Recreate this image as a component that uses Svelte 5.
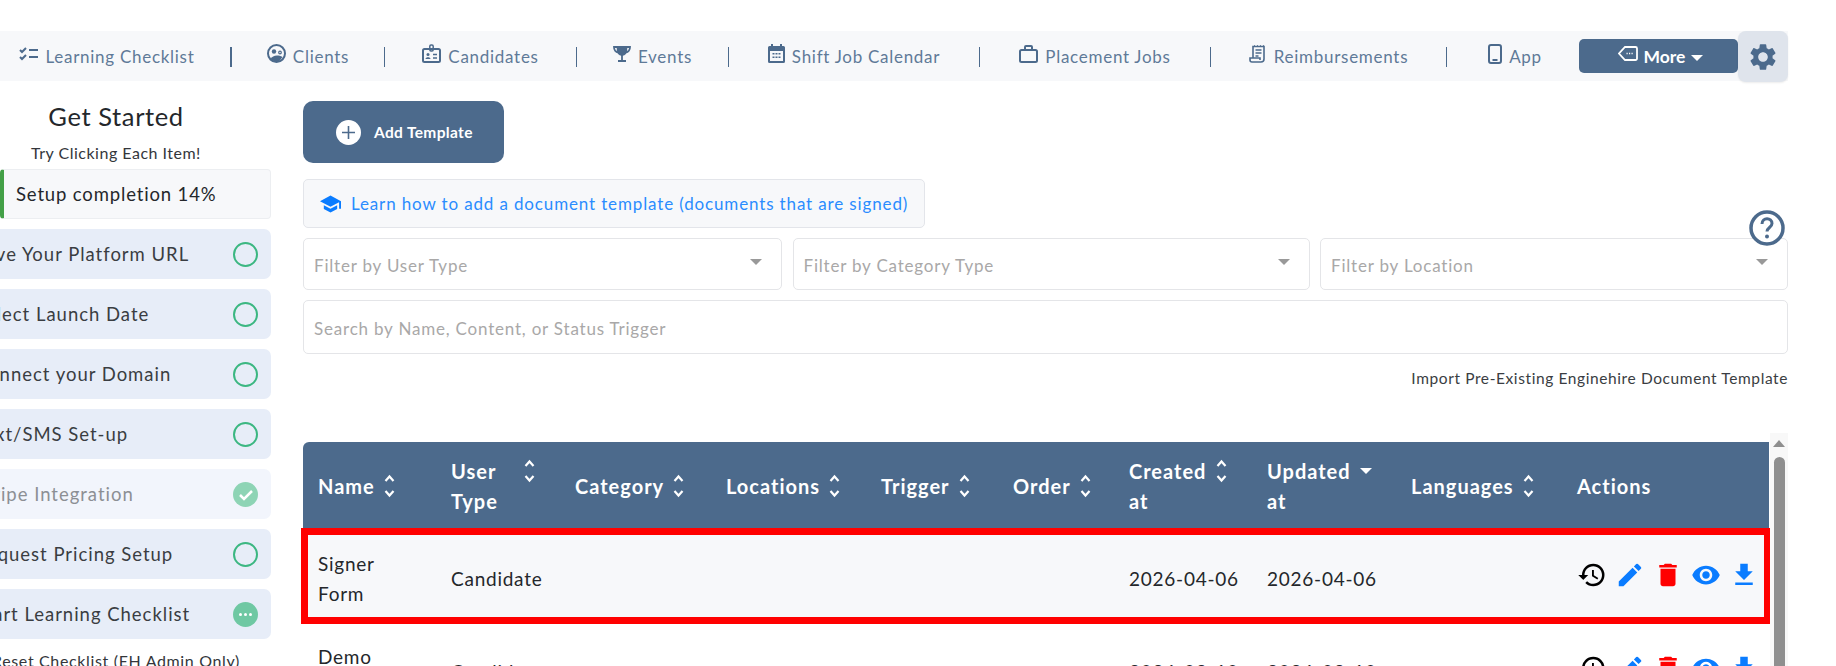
<script>
  const steps = [
    { label: "Save Your Platform URL", state: "todo" },
    { label: "Select Launch Date", state: "todo" },
    { label: "Connect your Domain", state: "todo" },
    { label: "Text/SMS Set-up", state: "todo" },
    { label: "Stripe Integration", state: "done" },
    { label: "Request Pricing Setup", state: "todo" },
    { label: "Start Learning Checklist", state: "busy" }
  ];

  const columns = [
    { label: "Name", sort: "both" },
    { label: "User Type", sort: "both", wrap: true },
    { label: "Category", sort: "both" },
    { label: "Locations", sort: "both" },
    { label: "Trigger", sort: "both" },
    { label: "Order", sort: "both" },
    { label: "Created at", sort: "both", wrap: true },
    { label: "Updated at", sort: "desc", wrap: true },
    { label: "Languages", sort: "both" }
  ];

  const rows = [
    { name: "Signer Form", type: "Candidate", created: "2026-04-06", updated: "2026-04-06", flagged: true },
    { name: "Demo Form", type: "Candidate", created: "2026-03-10", updated: "2026-03-10", flagged: false }
  ];
</script>

<div class="page">
  <nav class="nav">
    <a class="nav-item first">
      <svg width="19" height="14" viewBox="0 0 19 14" fill="none" stroke="currentColor" stroke-width="2"><path d="M1 3l2 2 4-4M1 10l2 2 4-4M10 3h9M10 10h9"/></svg>
      <span>Learning Checklist</span>
    </a>
    <a class="nav-item">
      <svg width="19" height="19" viewBox="0 0 19 19" fill="none" stroke="currentColor" stroke-width="2"><circle cx="9.5" cy="9.5" r="8.5"/><circle cx="7" cy="7.5" r="2.2" fill="currentColor" stroke="none"/><circle cx="13" cy="8.5" r="1.3" stroke-width="1.2"/><path d="M3.5 15c2-3.500 7-4.500 12-2l-3 4h-6z" fill="currentColor" stroke="none"/></svg>
      <span>Clients</span>
    </a>
    <a class="nav-item">
      <svg width="19" height="19" viewBox="0 0 19 19" fill="none" stroke="currentColor" stroke-width="2"><rect x="1" y="5" width="17" height="13" rx="1.500"/><rect x="7.800" y="1" width="3.400" height="6" rx="1.200" stroke-width="1.500"/><circle cx="6" cy="10.500" r="1.500" fill="currentColor" stroke="none"/><path d="M3.500 15c0-2.500 5-2.500 5 0z" fill="currentColor" stroke="none"/><path d="M11 10.500h4M11 14h4" stroke-width="1.500"/></svg>
      <span>Candidates</span>
    </a>
    <a class="nav-item">
      <svg width="18" height="17" viewBox="0 0 18 17" fill="none" stroke="currentColor" stroke-width="1.800"><path d="M4.500 2h9c0 5 -1 8 -4.500 8S4.500 7 4.500 2z" fill="currentColor"/><path d="M4.500 2H1c0 3 1.500 5 4.500 5.500M13.500 2H17c0 3-1.500 5-4.500 5.500M9 10v5M5 16h8"/></svg>
      <span>Events</span>
    </a>
    <a class="nav-item">
      <svg width="17" height="19" viewBox="0 0 17 19"><path fill="currentColor" d="M3 0h2v2h7V0h2v2h1.500A1.500 1.500 0 0 1 17 3.500v14a1.500 1.500 0 0 1-1.500 1.500h-14A1.500 1.500 0 0 1 0 17.500v-14A1.500 1.500 0 0 1 1.500 2H3z"/><path fill="#f7f8fa" d="M2 7h13v10H2z"/><path fill="currentColor" d="M4.500 9h2v1.500h-2zM7.500 9h2v1.500h-2zM10.500 9h2v1.500h-2zM4.500 12.500h2V14h-2zM7.500 12.500h2V14h-2zM10.500 12.500h2V14h-2z"/></svg>
      <span>Shift Job Calendar</span>
    </a>
    <a class="nav-item">
      <svg width="19" height="18" viewBox="0 0 19 18" fill="none" stroke="currentColor" stroke-width="2"><rect x="1" y="5" width="17" height="12" rx="1.500"/><path d="M6 5V2a1 1 0 0 1 1-1h5a1 1 0 0 1 1 1v3"/></svg>
      <span>Placement Jobs</span>
    </a>
    <a class="nav-item">
      <svg width="18" height="18" viewBox="0 0 18 18" fill="none" stroke="currentColor" stroke-width="1.600"><path d="M4 13V1.500h11V14a3 3 0 0 1-3 3H3a2 2 0 0 1-2-2v-2h10v2"/><path d="M6.500 5h6M6.500 8h6M6.500 11h3"/><path d="M5 1h1M8 1h1M11 1h1M14 1h1" stroke-width="1.500"/></svg>
      <span>Reimbursements</span>
    </a>
    <a class="nav-item">
      <svg width="14" height="20" viewBox="0 0 14 20" fill="none" stroke="currentColor" stroke-width="2"><rect x="1" y="1" width="12" height="18" rx="2"/><path d="M4.500 16h5"/></svg>
      <span>App</span>
    </a>
    <button class="more">
      <svg width="20" height="15" viewBox="0 0 20 15" fill="none" stroke="currentColor" stroke-width="1.800"><path d="M7 1h10.500A1.500 1.500 0 0 1 19 2.500v10a1.500 1.500 0 0 1-1.500 1.500H7L1 7.500z"/><path d="M8.500 7.500h1.200M11 7.500h1.200M13.500 7.500h1.200" stroke-width="1.600"/></svg>
      <span>More</span>
      <i class="caret"></i>
    </button>
    <button class="gear" aria-label="Settings">
      <svg width="32" height="32" viewBox="0 0 24 24" fill="currentColor"><path d="M19.140 12.940c.04-.3.06-.61.06-.94 0-.32-.02-.64-.07-.94l2.030-1.580a.49.49 0 0 0 .12-.61l-1.920-3.320a.488.488 0 0 0-.59-.22l-2.390.96c-.5-.38-1.030-.7-1.620-.94l-.36-2.540a.484.484 0 0 0-.48-.41h-3.840c-.24 0-.43.17-.47.41l-.36 2.540c-.59.24-1.130.57-1.620.94l-2.390-.96c-.22-.08-.47 0-.59.22L2.740 8.870c-.12.21-.08.47.12.61l2.030 1.580c-.05.3-.09.63-.09.94s.02.64.07.94l-2.030 1.580a.49.49 0 0 0-.12.61l1.920 3.320c.12.22.37.29.59.22l2.390-.96c.5.38 1.030.7 1.620.94l.36 2.540c.05.24.24.41.48.41h3.840c.24 0 .44-.17.47-.41l.36-2.540c.59-.24 1.130-.56 1.620-.94l2.390.96c.22.08.47 0 .59-.22l1.920-3.320c.12-.22.07-.47-.12-.61l-2.010-1.580zM12 15.600c-1.980 0-3.600-1.620-3.600-3.600s1.620-3.600 3.600-3.600 3.600 1.620 3.600 3.600-1.620 3.600-3.600 3.600z"/></svg>
    </button>
  </nav>

  <div class="content">
    <aside class="sidebar">
      <h2>Get Started</h2>
      <p class="hint">Try Clicking Each Item!</p>
      <div class="progress">Setup completion 14%</div>
      {#each steps as step}
        <div class="step" class:done={step.state === "done"}>
          <span>{step.label}</span>
          {#if step.state === "todo"}
            <i class="ring"></i>
          {:else if step.state === "done"}
            <svg class="mark" width="25" height="25" viewBox="0 0 25 25"><circle cx="12.500" cy="12.500" r="12.500" fill="#8ed4b5"/><path d="M7 13l4 4 8-8" fill="none" stroke="#fff" stroke-width="2.500"/></svg>
          {:else}
            <svg class="mark" width="25" height="25" viewBox="0 0 25 25"><circle cx="12.500" cy="12.500" r="12.500" fill="#6fc8a3"/><circle cx="7.500" cy="12.500" r="1.500" fill="#fff"/><circle cx="12.500" cy="12.500" r="1.500" fill="#fff"/><circle cx="17.500" cy="12.500" r="1.500" fill="#fff"/></svg>
          {/if}
        </div>
      {/each}
      <p class="reset">Reset Checklist (EH Admin Only)</p>
    </aside>

    <main class="main">
      <button class="add">
        <span class="plus"><svg width="13" height="13" viewBox="0 0 13 13" stroke="currentColor" stroke-width="1.600"><path d="M6.500 0v13M0 6.500h13"/></svg></span>
        Add Template
      </button>

      <a class="learn">
        <svg width="21" height="18" viewBox="1 3 22 18" fill="currentColor"><path d="M5 13.180v4L12 21l7-3.820v-4L12 17l-7-3.820zM12 3 1 9l11 6 9-4.910V17h2V9L12 3z"/></svg>
        Learn how to add a document template (documents that are signed)
      </a>

      <div class="filters">
        <div class="field select">Filter by User Type</div>
        <div class="field select">Filter by Category Type</div>
        <div class="field select">Filter by Location</div>
      </div>
      <div class="field search">Search by Name, Content, or Status Trigger</div>
      <p class="import">Import Pre-Existing Enginehire Document Template</p>

      <svg class="help" width="36" height="36" viewBox="0 0 36 36"><circle cx="18" cy="18" r="16" fill="#fff" stroke="#4c6a8c" stroke-width="3.500"/><path d="M13 14c0-7 10-7 10-.5 0 4-5 4-5 8" fill="none" stroke="#4c6a8c" stroke-width="3"/><circle cx="18" cy="26.500" r="2" fill="#4c6a8c"/></svg>

      <div class="table-wrap">
        <table>
          <colgroup>
            <col class="c-name" /><col class="c-type" /><col class="c-cat" /><col class="c-loc" /><col class="c-trig" />
            <col class="c-ord" /><col class="c-crea" /><col class="c-upd" /><col class="c-lang" /><col class="c-act" />
          </colgroup>
          <thead>
            <tr>
              {#each columns as col}
                <th class:wrap={col.wrap}>
                  <div class="th-in">
                    <span>{col.label}</span>
                    {#if col.sort === "both"}
                      <svg class="sort" width="13" height="30" viewBox="0 0 13 30" fill="none" stroke="currentColor" stroke-width="2.200"><path d="M2.500 10l4-4.500 4 4.500M2.500 20l4 4.500 4-4.500"/></svg>
                    {:else}
                      <i class="caret sort-desc"></i>
                    {/if}
                  </div>
                </th>
              {/each}
              <th>Actions</th>
            </tr>
          </thead>
          <tbody>
            {#each rows as row}
              <tr class:flagged={row.flagged}>
                <td>{row.name}</td>
                <td>{row.type}</td>
                <td></td>
                <td></td>
                <td></td>
                <td></td>
                <td class="date">{row.created}</td>
                <td class="date">{row.updated}</td>
                <td></td>
                <td class="actions">
                  <div class="icons">
                    <svg width="30" height="30" viewBox="0 0 24 24" fill="#000"><path d="M13 3a9 9 0 0 0-9 9H1l3.890 3.890.07.14L9 12H6c0-3.870 3.130-7 7-7s7 3.130 7 7-3.130 7-7 7c-1.930 0-3.680-.79-4.940-2.060l-1.420 1.420A8.954 8.954 0 0 0 13 21a9 9 0 0 0 0-18zm-1 5v5l4.280 2.540.72-1.210-3.500-2.080V8H12z"/></svg>
                    <svg width="30" height="30" viewBox="0 0 24 24" fill="#0a7cff"><path d="M3 17.250V21h3.750L17.810 9.940l-3.750-3.750L3 17.250zM20.710 7.040a1 1 0 0 0 0-1.410l-2.340-2.340a1 1 0 0 0-1.410 0l-1.830 1.830 3.750 3.750 1.830-1.830z"/></svg>
                    <svg width="30" height="30" viewBox="0 0 24 24" fill="#f00"><path d="M6 19c0 1.100.9 2 2 2h8c1.100 0 2-.9 2-2V7H6v12zM19 4h-3.500l-1-1h-5l-1 1H5v2h14V4z"/></svg>
                    <svg width="30" height="30" viewBox="0 0 24 24" fill="#0a7cff"><path d="M12 4.500C7 4.500 2.730 7.610 1 12c1.730 4.390 6 7.500 11 7.500s9.270-3.110 11-7.500c-1.730-4.390-6-7.500-11-7.500zM12 17c-2.760 0-5-2.240-5-5s2.240-5 5-5 5 2.240 5 5-2.240 5-5 5zm0-8c-1.660 0-3 1.340-3 3s1.340 3 3 3 3-1.340 3-3-1.340-3-3-3z"/></svg>
                    <svg width="30" height="30" viewBox="0 0 24 24" fill="#0a7cff"><path d="M19 9h-4V3H9v6H5l7 7 7-7zM5 18v2h14v-2H5z"/></svg>
                  </div>
                </td>
              </tr>
            {/each}
          </tbody>
        </table>
        <div class="scrollbar">
          <i class="up"></i>
          <i class="thumb"></i>
        </div>
      </div>
    </main>
  </div>
</div>

<style>
  :global(body) {
    margin: 0;
    background: #fff;
  }
  .page {
    width: 1836px;
    height: 666px;
    overflow: hidden;
    padding-top: 31px;
    box-sizing: border-box;
    font-family: Lato, "Open Sans", sans-serif;
    color: #2b2e33;
  }

  /* top nav */
  .nav {
    width: 1788px;
    height: 50px;
    display: grid;
    grid-template-columns: 232px 153px 192px 152px 251px 231px 236px 132px 159px 50px;
    align-items: center;
    background: #f7f8fa;
    color: #4c6a8c;
  }
  .nav-item {
    height: 20px;
    display: flex;
    align-items: center;
    justify-content: center;
    gap: 7px;
    border-right: 1px solid #4c6a8c;
    font-size: 17px;
    letter-spacing: 0.72px;
    color: #5f7a98;
  }
  .nav-item svg {
    color: #4c6a8c;
    margin-top: -6px;
    flex: none;
  }
  .nav-item.first {
    border-right-width: 2px;
    padding-right: 16px;
  }
  .nav-item:nth-child(8) {
    border-right: 0;
    padding-left: 4px;
  }
  .more {
    height: 34px;
    margin-top: -2px;
    border: 0;
    border-radius: 5px;
    background: #4c6a8c;
    color: #fff;
    display: flex;
    align-items: center;
    justify-content: center;
    gap: 6px;
    font: 700 17.500px Lato, sans-serif;
    padding: 2px 0 0 4px;
  }
  .more svg {
    margin-top: -6px;
  }
  .caret {
    display: inline-block;
    width: 0;
    height: 0;
    border-left: 6px solid transparent;
    border-right: 6px solid transparent;
    border-top: 6px solid #fff;
    margin-top: 3px;
  }
  .gear {
    height: 51px;
    border: 0;
    padding: 0;
    border-radius: 8px;
    background: #dfe4ec;
    box-shadow: 0 1px 2px rgba(0, 0, 0, 0.08);
    color: #4c6a8c;
    display: flex;
    align-items: center;
    justify-content: center;
  }

  .content {
    display: flex;
  }

  /* checklist column, its left part runs off the page */
  .sidebar {
    width: 310px;
    margin-left: -39px;
    flex: none;
    text-align: center;
  }
  .sidebar h2 {
    margin: 20px 0 0;
    height: 30px;
    font-size: 25.500px;
    line-height: 30px;
    font-weight: 400;
    letter-spacing: 0.6px;
    color: #24272b;
  }
  .hint {
    margin: 12px 0 0;
    height: 19px;
    font-size: 16px;
    line-height: 19px;
    letter-spacing: 0.5px;
    color: #33363b;
  }
  .progress {
    margin: 7px 0 0 39px;
    height: 50px;
    box-sizing: border-box;
    border: 1px solid #eceef1;
    border-left: 4px solid #43a047;
    border-radius: 4px;
    background: #f7f8fa;
    padding-left: 12px;
    text-align: left;
    font-size: 18.500px;
    line-height: 48px;
    letter-spacing: 0.85px;
    color: #24272b;
  }
  .step {
    margin-top: 10px;
    height: 50px;
    display: flex;
    align-items: center;
    justify-content: space-between;
    padding: 0 13px 0 14px;
    border-radius: 7px;
    background: #e7edf8;
    font-size: 18.500px;
    letter-spacing: 0.98px;
    color: #3a3d42;
  }
  .step.done {
    background: #f2f5fc;
    color: #8c8f94;
  }
  .ring {
    width: 25px;
    height: 25px;
    box-sizing: border-box;
    border: 2.500px solid #3cb782;
    border-radius: 50%;
  }
  .reset {
    margin: 12px 0 0;
    font-size: 16px;
    line-height: 20px;
    letter-spacing: 0.65px;
    color: #33363b;
  }

  /* main column */
  .main {
    position: relative;
    width: 1485px;
    margin-left: 32px;
    flex: none;
    padding-top: 20px;
  }
  .add {
    width: 201px;
    height: 62px;
    border: 0;
    border-radius: 10px;
    background: #4c6a8c;
    color: #fff;
    display: flex;
    align-items: center;
    gap: 13px;
    padding: 0 0 0 33px;
    font: 700 15.500px Lato, sans-serif;
    letter-spacing: 0.35px;
  }
  .plus {
    width: 25px;
    height: 25px;
    border-radius: 50%;
    background: #fff;
    color: #4c6a8c;
    display: flex;
    align-items: center;
    justify-content: center;
  }
  .learn {
    margin-top: 16px;
    width: 622px;
    height: 49px;
    box-sizing: border-box;
    display: flex;
    align-items: center;
    gap: 10px;
    padding-left: 16px;
    border: 1px solid #e3e5ea;
    border-radius: 5px;
    background: #f7f8fa;
    color: #2a8cff;
    font-size: 17px;
    letter-spacing: 0.86px;
    white-space: nowrap;
  }
  .learn svg {
    color: #0a7cff;
    flex: none;
  }
  .filters {
    margin-top: 10px;
    display: grid;
    grid-template-columns: 479px 517px 468px;
    gap: 10.500px;
  }
  .field {
    box-sizing: border-box;
    border: 1px solid #e4e5e8;
    border-radius: 5px;
    padding: 2px 0 0 10px;
    display: flex;
    align-items: center;
    color: #a9a8a8;
    font-size: 17px;
    letter-spacing: 0.8px;
  }
  .select {
    position: relative;
    height: 52px;
  }
  .select::after {
    content: "";
    position: absolute;
    right: 19px;
    top: 20px;
    border-left: 6px solid transparent;
    border-right: 6px solid transparent;
    border-top: 6px solid #999;
  }
  .search {
    margin-top: 10px;
    height: 54px;
  }
  .import {
    margin: 13px 0 0;
    height: 22px;
    line-height: 22px;
    text-align: right;
    font-size: 15.500px;
    letter-spacing: 0.6px;
    color: #3a3d42;
  }
  .help {
    position: absolute;
    left: 1446px;
    top: 129px;
  }

  /* table */
  .table-wrap {
    margin-top: 44px;
    display: flex;
    align-items: stretch;
    height: 300px;
  }
  table {
    width: 1466px;
    margin-top: 9px;
    align-self: flex-start;
    border-collapse: collapse;
    table-layout: fixed;
    font-size: 19px;
    line-height: 30px;
  }
  .c-name { width: 133px; }
  .c-type { width: 124px; }
  .c-cat { width: 151px; }
  .c-loc { width: 155px; }
  .c-trig { width: 132px; }
  .c-ord { width: 116px; }
  .c-crea { width: 138px; }
  .c-upd { width: 144px; }
  .c-lang { width: 166px; }
  .c-act { width: 207px; }
  thead tr {
    background: #4c6a8c;
    color: #fff;
  }
  th {
    height: 88px;
    padding: 0 15px;
    box-sizing: border-box;
    text-align: left;
    font-weight: 700;
    font-size: 20px;
    letter-spacing: 1px;
  }
  th.wrap {
    padding-right: 24px;
  }
  th:first-child {
    border-top-left-radius: 6px;
  }
  .th-in {
    display: flex;
    align-items: flex-start;
    justify-content: flex-start;
    gap: 8px;
  }
  .sort {
    flex: none;
  }
  .sort-desc {
    margin-top: 12px;
    flex: none;
  }
  td {
    height: 94px;
    box-sizing: border-box;
    padding: 5px 15px 0;
    vertical-align: middle;
    color: #24272b;
    letter-spacing: 0.75px;
  }
  td.date {
    white-space: nowrap;
  }
  tr.flagged {
    outline: 7px solid #f00;
    outline-offset: -5px;
    background: #f7f8fa;
  }
  tr.flagged td {
    height: 92px;
  }
  td.actions {
    padding: 0 0 3px 15px;
  }
  .icons {
    display: flex;
    gap: 8px;
  }
  .scrollbar {
    width: 18px;
    margin-left: 1px;
    display: flex;
    flex-direction: column;
    align-items: center;
    background: #f8f8f8;
  }
  .up {
    margin-top: 7px;
    border-left: 6px solid transparent;
    border-right: 6px solid transparent;
    border-bottom: 7px solid #8f8f8f;
  }
  .thumb {
    margin-top: 10px;
    width: 11px;
    flex: 1;
    border-radius: 6px 6px 0 0;
    background: #8f8f8f;
  }
</style>
